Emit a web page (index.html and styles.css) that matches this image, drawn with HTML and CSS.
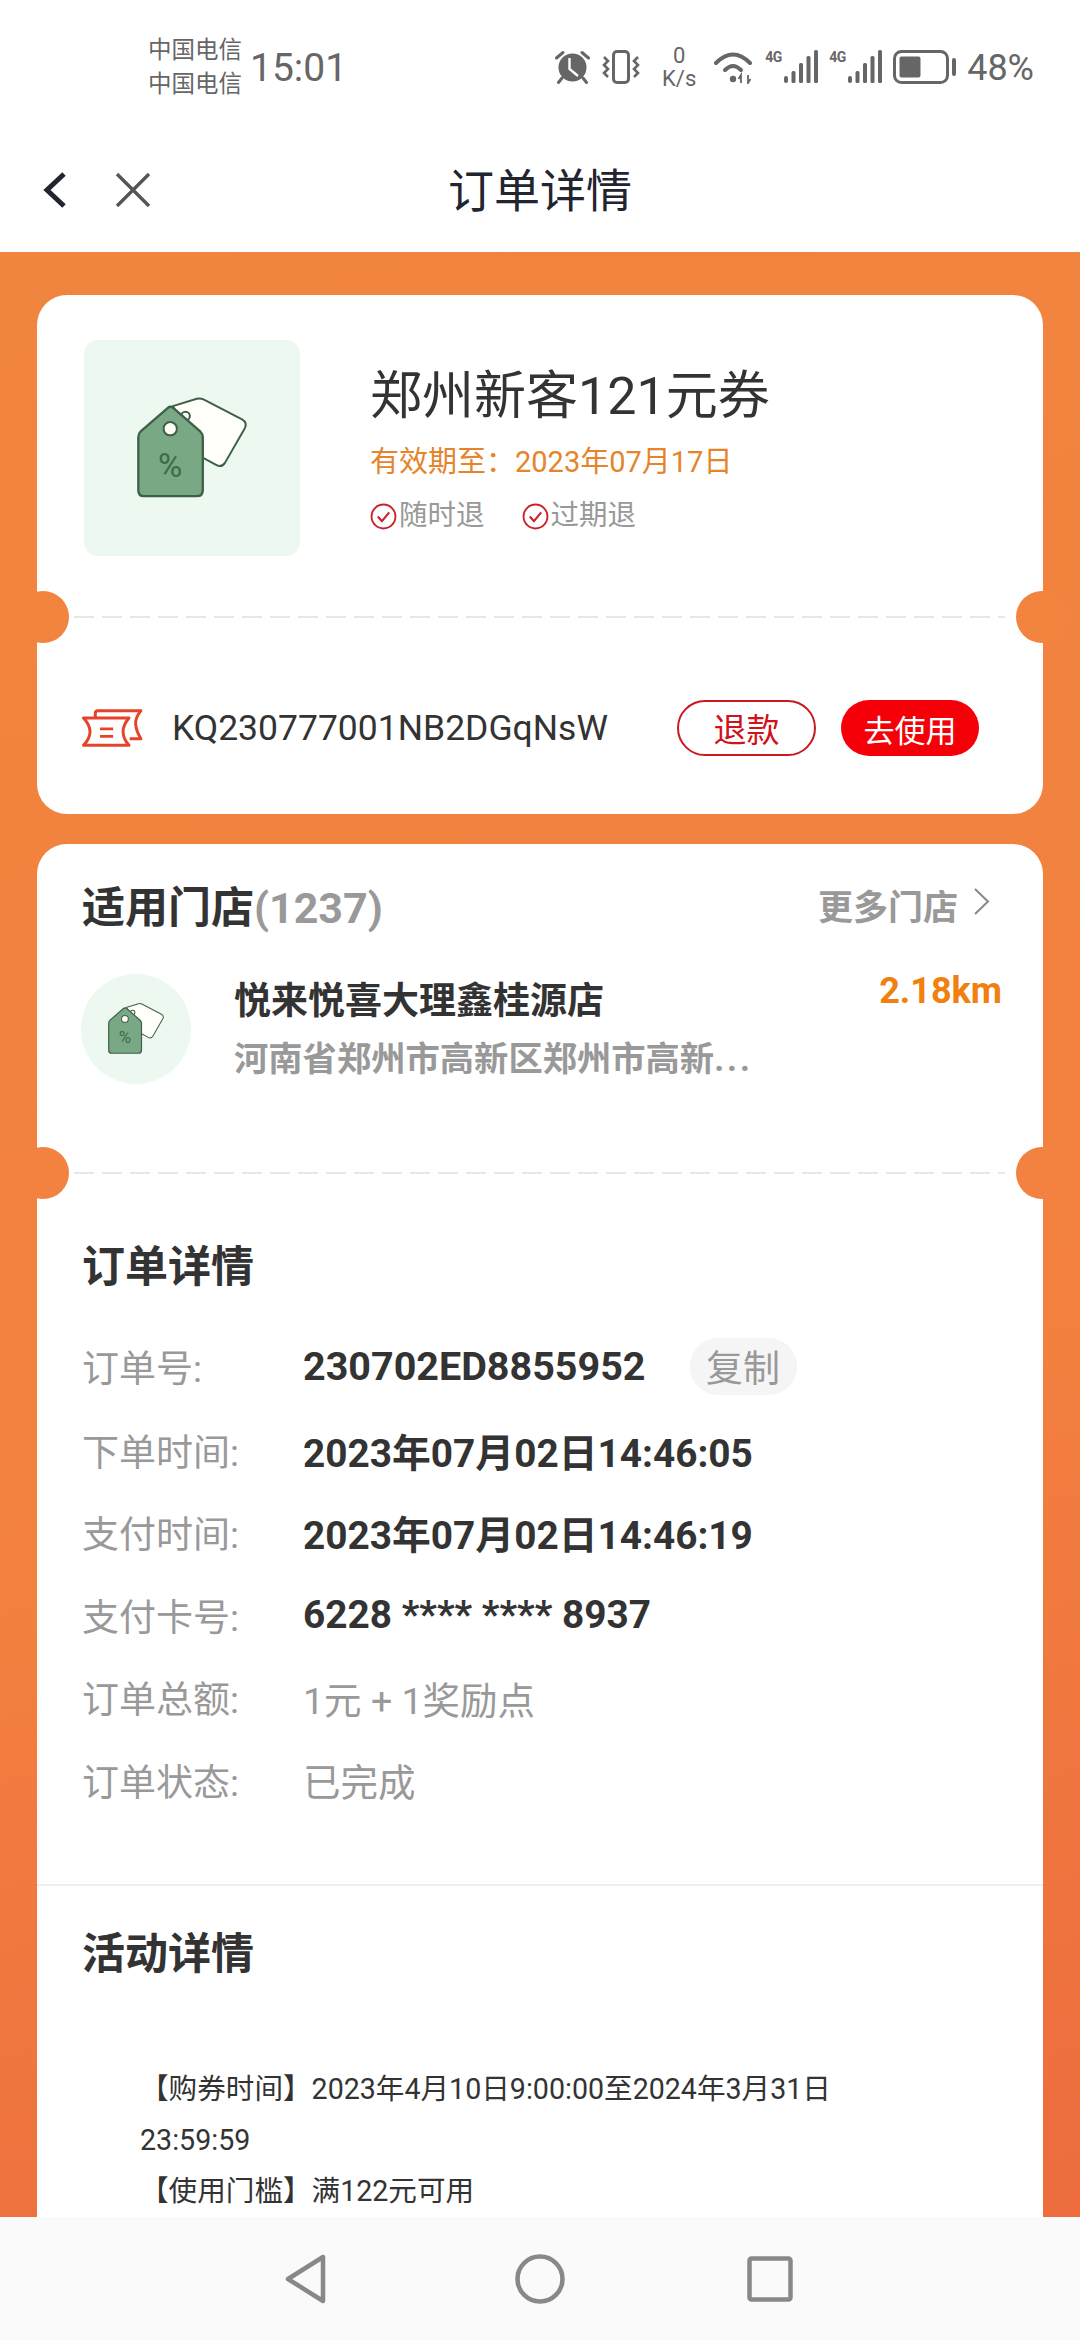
FILE: index.html
```html
<!DOCTYPE html>
<html>
  <head>
    <meta charset="UTF-8">
    <meta name="viewport" content="width=device-width, initial-scale=1.0">
    <title>订单详情</title>
    <link rel="stylesheet" href="styles.css">
  </head>
  <body>
    <svg class="defs" width="0" height="0">
      <symbol id="tags" viewBox="220 225 355 315">
        <path d="M340 255 L412 233 Q422 230 432 235 L548 295 Q565 305 556 322 L497 425 Q487 441 470 432 L420 405 Z" fill="#fffef9" stroke="#3f5f48" stroke-width="6" stroke-linejoin="round"/>
        <circle cx="378" cy="285" r="13" fill="#fffef9" stroke="#3f5f48" stroke-width="6"/>
        <path d="M325 260 Q333 254 341 260 L423 332 Q430 339 430 348 V508 Q430 526 412 526 H253 Q236 526 236 508 V348 Q236 338 244 330 Z" fill="#78a884" stroke="#3f5f48" stroke-width="7" stroke-linejoin="round"/>
        <circle cx="332" cy="323" r="20" fill="#fffef9" stroke="#3f5f48" stroke-width="6"/>
      </symbol>
      <symbol id="check" viewBox="0 0 26 26">
        <circle cx="13" cy="13" r="11.5" fill="none" stroke="#c9202c" stroke-width="1.8"/>
        <path d="M7.5 13 L11.5 17.5 L18.5 9" fill="none" stroke="#c9202c" stroke-width="2"/>
      </symbol>
      <symbol id="signal" viewBox="0 0 35 34">
        <rect x="1" y="26" width="4" height="7" rx="2" fill="#666"/>
        <rect x="8.5" y="21" width="4" height="12" rx="1.5" fill="#666"/>
        <rect x="16" y="13" width="4" height="20" rx="1.5" fill="#666"/>
        <rect x="23.5" y="6" width="4" height="27" rx="1.5" fill="#666"/>
        <rect x="31" y="0" width="4" height="33" rx="1.5" fill="#666"/>
      </symbol>
    </svg>

    <div class="status-bar">
      <div class="carriers">
        <span>中国电信</span>
        <span>中国电信</span>
      </div>
      <span class="clock">15:01</span>
      <div class="status-icons">
        <!-- alarm -->
        <svg width="35" height="34" viewBox="0 0 35 34">
          <circle cx="17.5" cy="17.5" r="14" fill="#666"/>
          <path d="M14.5 8 V19 L23 26" fill="none" stroke="#fff" stroke-width="2.4"/>
          <path d="M1.5 8 L8 2.5 M27 2.5 L33.5 8 M7 28 L3.5 32.5 M28 28 L31.5 32.5" stroke="#666" stroke-width="3" stroke-linecap="round"/>
        </svg>
        <!-- vibrate -->
        <svg width="40" height="34" viewBox="0 0 40 34">
          <rect x="12.5" y="1.5" width="15" height="31" rx="3.5" fill="none" stroke="#666" stroke-width="3"/>
          <path d="M3 7 L7 11 L3 15 L7 19 L3 23 L7 27" fill="none" stroke="#666" stroke-width="2.6"/>
          <path d="M37 7 L33 11 L37 15 L33 19 L37 23 L33 27" fill="none" stroke="#666" stroke-width="2.6"/>
        </svg>
        <div class="net-speed">
          <span>0</span>
          <span>K/s</span>
        </div>
        <!-- wifi -->
        <svg class="wifi" width="40" height="34" viewBox="0 0 40 34">
          <path d="M2 13 Q19 -4 36 13" fill="none" stroke="#666" stroke-width="4" stroke-linecap="round"/>
          <path d="M11 20 Q19 12 27 20" fill="none" stroke="#666" stroke-width="4" stroke-linecap="round"/>
          <circle cx="19" cy="29" r="3.2" fill="#666"/>
          <path d="M27 33 V25 L24.5 29 M34 25 V33 L36.5 29" fill="none" stroke="#666" stroke-width="1.8"/>
        </svg>
        <div class="signal">
          <span class="signal-type">4G</span>
          <svg width="35" height="34"><use href="#signal"/></svg>
        </div>
        <div class="signal">
          <span class="signal-type">4G</span>
          <svg width="35" height="34"><use href="#signal"/></svg>
        </div>
        <!-- battery -->
        <svg width="63" height="34" viewBox="0 0 63 34">
          <rect x="1.5" y="1.5" width="53" height="31" rx="7" fill="none" stroke="#666" stroke-width="3"/>
          <rect x="6.5" y="6.5" width="21" height="21" rx="2" fill="#666"/>
          <rect x="59" y="8" width="4" height="18" rx="2" fill="#666"/>
        </svg>
        <span class="battery-level">48%</span>
      </div>
    </div>

    <div class="nav-bar">
      <div class="nav-actions">
        <svg width="24" height="38" viewBox="0 0 24 38">
          <path d="M21 3 L4 19 L21 35" fill="none" stroke="#22242f" stroke-width="5"/>
        </svg>
        <svg width="36" height="34" viewBox="0 0 36 34">
          <path d="M2 1 L34 33 M34 1 L2 33" fill="none" stroke="#555" stroke-width="3.4"/>
        </svg>
      </div>
      <h1 class="nav-title">订单详情</h1>
    </div>

    <div class="content">
      <div class="card">
        <div class="coupon-top">
          <div class="coupon-pic">
            <svg width="118" height="105" viewBox="220 225 355 315">
              <use href="#tags" x="220" y="225" width="355" height="315"/>
              <text class="tag-percent" x="332" y="468">%</text>
            </svg>
          </div>
          <div class="coupon-info">
            <div class="coupon-name">郑州新客121元券</div>
            <div class="coupon-valid">有效期至：2023年07月17日</div>
            <div class="coupon-tags">
              <span class="coupon-tag"><svg width="27" height="27"><use href="#check"/></svg>随时退</span>
              <span class="coupon-tag"><svg width="27" height="27"><use href="#check"/></svg>过期退</span>
            </div>
          </div>
        </div>
        <div class="ticket-cut"></div>
        <div class="code-row">
          <svg class="code-icon" width="62" height="38" viewBox="60 60 185 115">
            <path d="M102 86 V72 Q102 65 110 65 H240 Q222 88 224 106 Q226 128 240 150 H206" fill="none" stroke="#e5432a" stroke-width="9" stroke-linejoin="round"/>
            <path d="M66 87 H204 Q186 108 186 128 Q186 150 204 170 H66 Q86 150 86 128 Q86 108 66 87 Z" fill="#fff" stroke="#e5432a" stroke-width="9" stroke-linejoin="round"/>
            <path d="M116 120 H156 M116 143 H156" stroke="#e5432a" stroke-width="8"/>
          </svg>
          <span class="code-text">KQ230777001NB2DGqNsW</span>
          <span class="btn btn-refund">退款</span>
          <span class="btn btn-use">去使用</span>
        </div>
      </div>

      <div class="card card-details">
        <div class="store-head">
          <h2 class="section-title">适用门店<span class="store-count">(1237)</span></h2>
          <div class="store-more">
            更多门店
            <svg width="17" height="27" viewBox="0 0 17 27">
              <path d="M2 1 L15 13.5 L2 26" fill="none" stroke="#888" stroke-width="2"/>
            </svg>
          </div>
        </div>
        <div class="store-row">
          <div class="store-pic">
            <svg width="60" height="54" viewBox="220 225 355 315">
              <use href="#tags" x="220" y="225" width="355" height="315"/>
              <text class="tag-percent" x="332" y="468">%</text>
            </svg>
          </div>
          <div class="store-info">
            <div class="store-name">悦来悦喜大理鑫桂源店</div>
            <div class="store-addr">河南省郑州市高新区郑州市高新<span class="store-dots">...</span></div>
          </div>
          <div class="store-dist">2.18km</div>
        </div>
        <div class="ticket-cut ticket-cut-lower"></div>

        <div class="order-block">
          <h2 class="section-title">订单详情</h2>
          <div class="detail-rows">
            <div class="detail-row detail-row-first">
              <span class="detail-label">订单号:</span>
              <span class="detail-value">230702ED8855952</span>
              <span class="copy-btn">复制</span>
            </div>
            <div class="detail-row">
              <span class="detail-label">下单时间:</span>
              <span class="detail-value">2023年07月02日14:46:05</span>
            </div>
            <div class="detail-row">
              <span class="detail-label">支付时间:</span>
              <span class="detail-value">2023年07月02日14:46:19</span>
            </div>
            <div class="detail-row">
              <span class="detail-label">支付卡号:</span>
              <span class="detail-value">6228 **** **** 8937</span>
            </div>
            <div class="detail-row">
              <span class="detail-label">订单总额:</span>
              <span class="detail-plain">1元 + 1奖励点</span>
            </div>
            <div class="detail-row">
              <span class="detail-label">订单状态:</span>
              <span class="detail-plain">已完成</span>
            </div>
          </div>
        </div>

        <div class="activity-block">
          <h2 class="section-title">活动详情</h2>
          <div class="activity-text">
            <p>【购券时间】2023年4月10日9:00:00至2024年3月31日<br>23:59:59</p>
            <p>【使用门槛】满122元可用</p>
          </div>
        </div>
      </div>
    </div>

    <div class="soft-keys">
      <svg width="44" height="50" viewBox="0 0 44 50">
        <path d="M39 3 V47 L4 25 Z" fill="none" stroke="#888" stroke-width="4.5" stroke-linejoin="round"/>
      </svg>
      <svg class="key-home" width="50" height="50" viewBox="0 0 50 50">
        <circle cx="25" cy="25" r="22.5" fill="none" stroke="#888" stroke-width="4.5"/>
      </svg>
      <svg width="46" height="46" viewBox="0 0 46 46">
        <rect x="2.5" y="2.5" width="41" height="41" rx="2" fill="none" stroke="#888" stroke-width="4.5"/>
      </svg>
    </div>
  </body>
</html>
```
FILE: styles.css
```css
* {
    box-sizing: border-box;
}

body {
    margin: 0;
    width: 1080px;
    height: 2340px;
    overflow: hidden;
    display: flex;
    flex-direction: column;
    background: #fff;
    font-family: Roboto, "Noto Sans CJK SC", sans-serif;
    color: #333;
}

.defs {
    position: absolute;
}

/* status bar */
.status-bar {
    height: 134px;
    flex: none;
    display: flex;
    align-items: center;
    padding: 0 46px 0 148px;
    color: #666;
}

.carriers {
    display: flex;
    flex-direction: column;
    font-size: 23.5px;
    line-height: 34px;
}

.clock {
    margin-left: 8px;
    padding-top: 2px;
    font-size: 39px;
    line-height: 44px;
}

.status-icons {
    margin-left: auto;
    display: flex;
    align-items: center;
    gap: 11px;
}

.net-speed {
    display: flex;
    flex-direction: column;
    align-items: center;
    width: 36px;
    margin-left: 9px;
    font-size: 22px;
    line-height: 23px;
}

.wifi {
    margin-left: 6px;
}

.signal {
    display: flex;
    align-items: flex-start;
    height: 34px;
}

.signal-type {
    width: 18px;
    font-size: 14px;
    line-height: 15px;
    font-weight: 700;
    letter-spacing: -0.5px;
}

.battery-level {
    padding-top: 2px;
    font-size: 36px;
    line-height: 44px;
}

/* title bar */
.nav-bar {
    height: 118px;
    flex: none;
    display: grid;
    grid-template-columns: 1fr auto 1fr;
    align-items: center;
    padding: 0 43px 6px;
}

.nav-actions {
    display: flex;
    align-items: center;
    gap: 48px;
}

.nav-title {
    margin: 0;
    padding-top: 1px;
    font-size: 46px;
    line-height: 60px;
    font-weight: 400;
    color: #22242f;
    grid-column: 2;
}

/* orange page area */
.content {
    flex: 1;
    min-height: 0;
    overflow: hidden;
    padding: 43px 37px 0;
    background: linear-gradient(165deg, #f0853f, #f3803f 60%, #ec6c3e);
}

.card {
    position: relative;
    background: #fff;
    border-radius: 30px;
}

.card-details {
    margin-top: 30px;
    border-radius: 30px 30px 0 0;
}

.coupon-top {
    display: flex;
    padding: 45px 47px 60px;
}

.coupon-pic {
    width: 216px;
    height: 216px;
    border-radius: 14px;
    background: #edf8f0;
    display: flex;
    align-items: center;
    justify-content: center;
}

.tag-percent {
    font-family: Roboto, sans-serif;
    font-size: 100px;
    text-anchor: middle;
    fill: #3f6a4a;
}

.coupon-info {
    margin-left: 70px;
    padding-top: 27px;
}

.coupon-name {
    font-size: 52px;
    line-height: 60px;
    color: #333;
}

.coupon-valid {
    margin-top: 15px;
    font-size: 29px;
    line-height: 40px;
    color: #e5842a;
}

.coupon-tags {
    margin-top: 16px;
    display: flex;
    gap: 37px;
}

.coupon-tag {
    display: flex;
    align-items: center;
    gap: 2px;
    font-size: 28.5px;
    line-height: 36px;
    color: #999;
}

/* dashed tear line with the two round notches */
.ticket-cut {
    position: relative;
    height: 2px;
    margin: 0 38px 0 37px;
    background: repeating-linear-gradient(90deg, #e8e8e8 0 20px, transparent 20px 28px);
}

.ticket-cut::before,
.ticket-cut::after {
    content: "";
    position: absolute;
    top: -25px;
    width: 52px;
    height: 52px;
    border-radius: 50%;
    background: #f2843f;
}

.ticket-cut::before {
    left: -57px;
}

.ticket-cut::after {
    right: -63px;
}

.ticket-cut-lower {
    margin-top: 88px;
}

.ticket-cut-lower::before,
.ticket-cut-lower::after {
    background: #f38140;
}

.code-row {
    display: flex;
    align-items: center;
    padding: 82px 64px 58px 44px;
}

.code-text {
    margin-left: 29px;
    font-size: 35.5px;
    line-height: 56px;
    color: #333;
}

.btn {
    height: 56px;
    display: flex;
    align-items: center;
    justify-content: center;
    border-radius: 28px;
    font-size: 31px;
}

.btn-refund {
    width: 139px;
    margin-left: auto;
    border: 2px solid #c9191f;
    color: #d0121b;
    font-size: 33px;
}

.btn-use {
    width: 138px;
    margin-left: 25px;
    background: #f50008;
    color: #fff;
}

/* applicable stores */
.section-title {
    margin: 0;
    font-size: 43px;
    line-height: 56px;
    font-weight: 700;
    color: #333;
}

.store-head {
    display: flex;
    align-items: center;
    justify-content: space-between;
    padding: 36px 53px 0 45px;
}

.store-count {
    color: #999;
}

.store-more {
    display: flex;
    align-items: center;
    gap: 15px;
    margin-top: -8px;
    font-size: 35px;
    font-weight: 700;
    color: #999;
}

.store-more svg {
    margin-top: -6px;
}

.store-row {
    display: flex;
    align-items: flex-start;
    margin-top: 38px;
    padding: 0 44px;
}

.store-pic {
    width: 110px;
    height: 110px;
    border-radius: 50%;
    background: #edf8f0;
    display: flex;
    align-items: center;
    justify-content: center;
}

.store-info {
    margin-left: 43px;
    padding-top: 6px;
}

.store-name {
    font-size: 37px;
    line-height: 44px;
    font-weight: 700;
    color: #333;
}

.store-addr {
    margin-top: 13px;
    font-size: 34.3px;
    line-height: 44px;
    font-weight: 700;
    color: #999;
}

.store-dots {
    letter-spacing: 3px;
}

.store-dist {
    margin: -3px -3px 0 auto;
    font-size: 36px;
    line-height: 40px;
    font-weight: 700;
    color: #f08010;
}

/* order details */
.order-block {
    padding: 65px 45px 75px;
    border-bottom: 2px solid #eee;
}

.detail-rows {
    margin-top: 42px;
    display: flex;
    flex-direction: column;
    gap: 24.5px;
}

.detail-row {
    height: 58px;
    display: flex;
    align-items: center;
    font-size: 37px;
}

.detail-row-first {
    margin-bottom: 1px;
}

.detail-label {
    width: 221px;
    flex: none;
    color: #999;
}

.detail-value {
    font-size: 38.8px;
    font-weight: 700;
    color: #333;
}

.detail-row-first .detail-value {
    font-size: 39.5px;
}

.detail-plain {
    font-size: 37.5px;
    color: #999;
}

.copy-btn {
    width: 107px;
    height: 57px;
    margin-left: 44px;
    border-radius: 28px;
    background: #f5f5f5;
    color: #999;
    display: flex;
    align-items: center;
    justify-content: center;
}

.activity-block {
    padding: 40px 45px 0;
}

.activity-text {
    margin-top: 82px;
    padding-left: 58px;
    font-size: 28.6px;
    line-height: 51px;
    color: #333;
}

.activity-text p {
    margin: 0;
}

/* android soft keys */
.soft-keys {
    height: 123px;
    flex: none;
    display: flex;
    align-items: center;
    background: #fafafa;
    padding-left: 284px;
}

.key-home {
    margin: 0 182px 0 187px;
}
```
